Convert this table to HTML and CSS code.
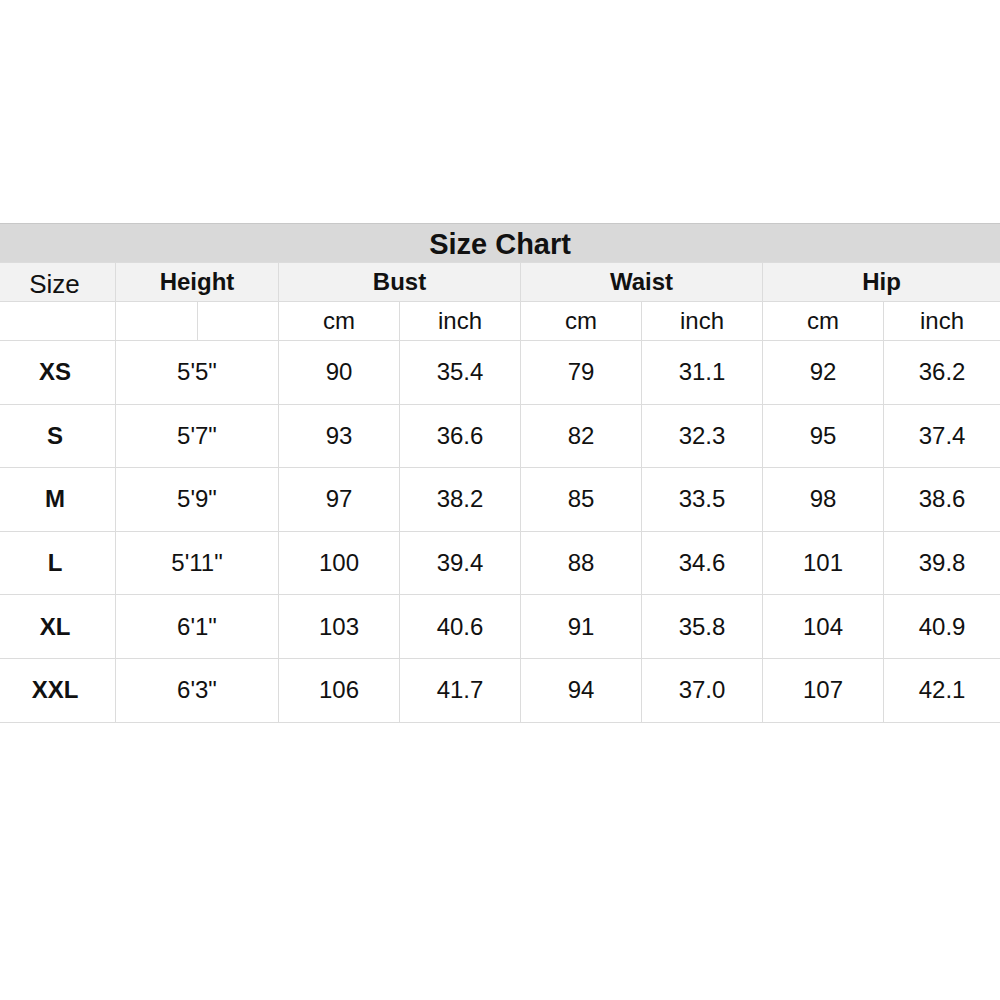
FILE: index.html
```html
<!DOCTYPE html>
<html>
<head>
<meta charset="utf-8">
<link rel="stylesheet" href="styles.css">
</head>
<body>
<div class="page">
<table class="chart">
<colgroup>
<col class="c-size"><col class="c-h1"><col class="c-h2"><col class="c-m"><col class="c-m"><col class="c-m"><col class="c-m"><col class="c-m"><col class="c-last">
</colgroup>
<tr class="title-row"><td colspan="9">Size Chart</td></tr>
<tr class="head-row">
<td class="size-head">Size</td>
<td colspan="2">Height</td>
<td colspan="2">Bust</td>
<td colspan="2">Waist</td>
<td colspan="2">Hip</td>
</tr>
<tr class="unit-row">
<td></td><td></td><td></td>
<td>cm</td><td>inch</td><td>cm</td><td>inch</td><td>cm</td><td>inch</td>
</tr>
<tr class="data-row"><td class="sz">XS</td><td colspan="2">5'5"</td><td>90</td><td>35.4</td><td>79</td><td>31.1</td><td>92</td><td>36.2</td></tr>
<tr class="data-row"><td class="sz">S</td><td colspan="2">5'7"</td><td>93</td><td>36.6</td><td>82</td><td>32.3</td><td>95</td><td>37.4</td></tr>
<tr class="data-row"><td class="sz">M</td><td colspan="2">5'9"</td><td>97</td><td>38.2</td><td>85</td><td>33.5</td><td>98</td><td>38.6</td></tr>
<tr class="data-row"><td class="sz">L</td><td colspan="2">5'11"</td><td>100</td><td>39.4</td><td>88</td><td>34.6</td><td>101</td><td>39.8</td></tr>
<tr class="data-row"><td class="sz">XL</td><td colspan="2">6'1"</td><td>103</td><td>40.6</td><td>91</td><td>35.8</td><td>104</td><td>40.9</td></tr>
<tr class="data-row"><td class="sz">XXL</td><td colspan="2">6'3"</td><td>106</td><td>41.7</td><td>94</td><td>37.0</td><td>107</td><td>42.1</td></tr>
</table>
</div>
</body>
</html>
```
FILE: styles.css
```css
html, body {
  margin: 0;
  padding: 0;
  background: #ffffff;
}
.page {
  padding-top: 223px;
  width: 1000px;
}
.chart {
  width: 1001px;
  border-collapse: collapse;
  table-layout: fixed;
  font-family: "Liberation Sans", Arial, sans-serif;
  color: #111;
  margin-left: -1px;
}
.c-size { width: 116px; }
.c-h1 { width: 82px; }
.c-h2 { width: 81px; }
.c-m { width: 121px; }
.c-last { width: 117px; }
.chart td {
  border: 1px solid #dcdcdc;
  text-align: center;
  padding: 0;
  vertical-align: middle;
  line-height: 1;
}
.title-row td {
  background: #d9d9d9;
  height: 36px;
  padding-top: 2px;
  font-weight: bold;
  font-size: 29px;
  border-top: 1px solid #c8c8c8;
}
.head-row td {
  background: #f2f2f2;
  height: 38px;
  font-weight: bold;
  font-size: 24px;
}
.head-row td.size-head {
  font-weight: normal;
  font-size: 26px;
  height: 35px;
  padding: 3px 6px 0 0;
}
.unit-row td {
  height: 38px;
  font-size: 24px;
}
.data-row td {
  height: 62.6px;
  font-size: 24px;
}
.data-row td.sz {
  font-weight: bold;
  padding-right: 5px;
}
```
